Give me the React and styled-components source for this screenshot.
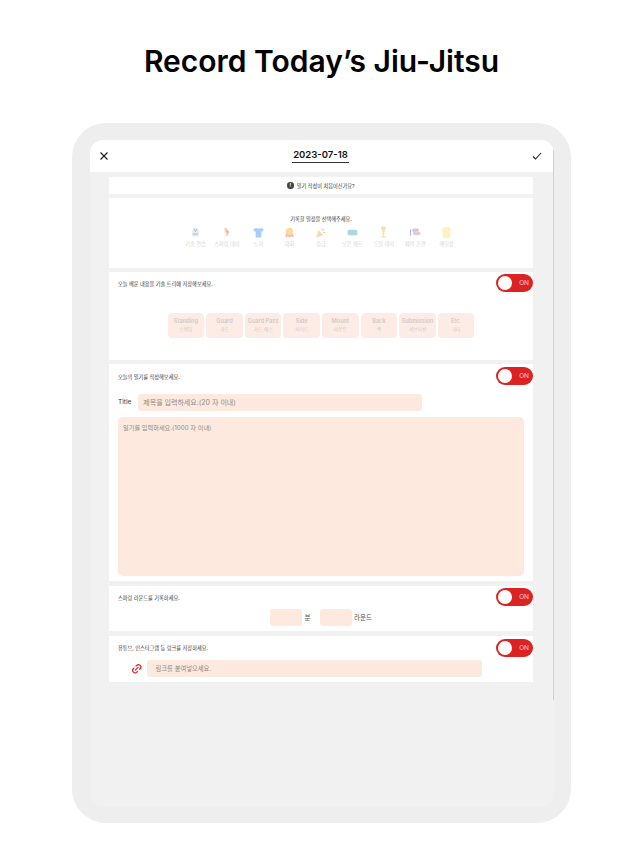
import React from "react";
import styled, { createGlobalStyle } from "styled-components";
import { Link2 } from "lucide-react";

const GlobalStyle = createGlobalStyle`
  html, body {
    margin: 0;
    padding: 0;
    background: #fff;
    font-family: Inter, "Noto Sans CJK KR", sans-serif;
  }
  * {
    box-sizing: border-box;
  }
`;

const Page = styled.div`
  width: 643px;
  height: 858px;
  overflow: hidden;
  background: #fff;
`;

const Headline = styled.h1`
  margin: 0;
  height: 123px;
  padding-top: 42px;
  text-align: center;
  font-size: 30px;
  line-height: 38px;
  font-weight: 600;
  color: #000;
`;

const Frame = styled.div`
  width: 499px;
  height: 700px;
  margin: 0 auto;
  padding: 17px 17px 17px 18px;
  background: #eeeeee;
  border-radius: 34px;
`;

const Screen = styled.div`
  position: relative;
  height: 666px;
  background: #f1f1f1;
  border-radius: 13px;
  overflow: hidden;
`;

const ScrollLine = styled.div`
  position: absolute;
  top: 10px;
  right: 0;
  width: 1px;
  height: 550px;
  background: #f3c3a5;
`;

const TopBar = styled.header`
  height: 32px;
  margin-right: 1px;
  padding: 0 11px 0 9px;
  background: #fff;
  display: flex;
  align-items: center;
  justify-content: space-between;
  color: #222;
`;

const DateLabel = styled.div`
  font-size: 9.5px;
  line-height: 12px;
  font-weight: 600;
  color: #111;
  padding: 0 1px 1px;
  border-bottom: 1.5px solid #333;
`;

const Cards = styled.div`
  display: flex;
  flex-direction: column;
  gap: 4.5px;
  padding: 5px 21px 0 19px;
`;

const Card = styled.section`
  height: ${(p) => p.$height}px;
  padding-left: ${(p) => p.$inset ?? 9}px;
  background: #fff;
`;

const InfoCard = styled.section`
  height: 16.5px;
  background: #fff;
  display: flex;
  align-items: center;
  justify-content: center;
  gap: 3px;
  font-size: 5.2px;
  color: #333;
`;

const InfoDot = styled.span`
  width: 6.5px;
  height: 6.5px;
  border-radius: 50%;
  background: #444;
  color: #fff;
  font-size: 5px;
  font-weight: 700;
  line-height: 6.5px;
  text-align: center;
`;

const CenterTitle = styled.div`
  padding-top: 17px;
  text-align: center;
  font-size: 5.2px;
  line-height: 8px;
  color: #333;
`;

const ScheduleRow = styled.div`
  margin: 3px 0 0;
  display: flex;
  justify-content: center;
`;

const ScheduleItem = styled.div`
  width: 31.4px;
  display: flex;
  flex-direction: column;
  align-items: center;
  gap: 0.5px;
  font-size: 5.2px;
  line-height: 8px;
  color: #d4d4d4;
  white-space: nowrap;

  svg {
    display: block;
    width: 13px;
    height: 13px;
  }
`;

const SectionHead = styled.div`
  height: 18px;
  margin-top: ${(p) => p.$top}px;
  display: flex;
  align-items: center;
  justify-content: space-between;
  font-size: 5.2px;
  color: #333;
`;

const Toggle = styled.div`
  width: 37px;
  height: 18px;
  padding: 2px 4px 2px 2px;
  border-radius: 9px;
  background: #dc2323;
  display: flex;
  align-items: center;
  justify-content: space-between;
  font-size: 6.5px;
  color: #f8c9c9;
`;

const Knob = styled.span`
  width: 14px;
  height: 14px;
  border-radius: 50%;
  background: #fff;
`;

const TreeRow = styled.div`
  margin: 21px 0 0 -9px;
  display: flex;
  justify-content: center;
  gap: 2px;
`;

const TreeButton = styled.div`
  width: 36.6px;
  height: 25.4px;
  border-radius: 4px;
  background: #fdece5;
  display: flex;
  flex-direction: column;
  align-items: center;
  justify-content: center;
  white-space: nowrap;
  color: #cfcac8;
`;

const TreeName = styled.span`
  font-size: 5.6px;
  line-height: 7.5px;
  font-weight: 600;
`;

const TreeSub = styled.span`
  font-size: 4.8px;
  line-height: 7px;
`;

const TitleRow = styled.div`
  margin-top: 8.5px;
  display: flex;
  align-items: center;
  gap: 7px;
  font-size: 6.5px;
  color: #333;
`;

const fieldStyle = `
  border: 0;
  outline: 0;
  display: block;
  background: #fde9dd;
  font-family: Inter, "Noto Sans CJK KR", sans-serif;
  color: #8f8a86;
  &::placeholder {
    color: #8f8a86;
    opacity: 1;
  }
`;

const Field = styled.input`
  ${fieldStyle}
  width: ${(p) => p.$width}px;
  height: 17px;
  padding: 0 ${(p) => p.$pad ?? 5}px;
  border-radius: 3px;
  font-size: ${(p) => p.$size ?? 7}px;
`;

const DiaryArea = styled.textarea`
  ${fieldStyle}
  width: 406px;
  height: 159px;
  margin-top: 6.5px;
  padding: 6px 5px;
  border-radius: 5px;
  font-size: 6.2px;
  resize: none;
`;

const RoundRow = styled.div`
  margin: 2.5px 0 0 -9px;
  display: flex;
  justify-content: center;
  align-items: center;
  font-size: 6.5px;
  color: #555;
`;

const RoundUnit = styled.span`
  margin: 0 ${(p) => p.$after}px 0 2.5px;
`;

const LinkRow = styled.div`
  margin-top: 3.5px;
  padding-left: 12.5px;
  display: flex;
  align-items: center;
  gap: 4.5px;
  color: #dc2323;

  svg {
    width: 11.5px;
    height: 11.5px;
    transform: rotate(-45deg);
  }
`;

const schedules = [
  {
    label: "기술 연습",
    icon: (
      <>
        <path d="M4 13V5.5L6.5 2h3L12 5.5V13z" fill="#e6e9ec" />
        <path d="M6 3l2 4 2-4M4.5 10h7" stroke="#a3abb6" strokeWidth="0.8" fill="none" />
      </>
    ),
  },
  {
    label: "스파링 데이",
    icon: (
      <>
        <path d="M5 2c3 0 6 2 6 6 0 3-2 5-5 5 2-2 2-4 0-6z" fill="#f9d2b8" />
        <path d="M7 5l4 2-2 2z" fill="#f3a878" />
      </>
    ),
  },
  {
    label: "노기",
    icon: <path d="M5 2L1.5 4.2 3 7l1.5-.6V14h7V6.4L13 7l1.5-2.8L11 2C10 3.5 6 3.5 5 2z" fill="#a9cdf4" />,
  },
  {
    label: "대회",
    icon: (
      <>
        <path d="M4 9l-1.5 5 3-1 2.5 1 2.5-1 3 1L12 9z" fill="#f8bdb0" />
        <circle cx="8" cy="6.5" r="4.5" fill="#fbdca0" />
      </>
    ),
  },
  {
    label: "승급",
    icon: (
      <>
        <path d="M2.5 14.5l3-9.5 6 6z" fill="#f8d8b0" />
        <path d="M9 3l1 2M12.5 3.5l-1.5 2.5M14 8l-2.5 0" stroke="#f4b0b0" strokeWidth="1.1" />
      </>
    ),
  },
  {
    label: "오픈 매트",
    icon: <rect x="2" y="4.5" width="12" height="7" rx="2" fill="#afd5e2" />,
  },
  {
    label: "드릴 데이",
    icon: <path d="M4.5 1h7L9 8v5h2.5v1h-7v-1H7V8z" fill="#f6dfb0" />,
  },
  {
    label: "체력 훈련",
    icon: (
      <>
        <rect x="4" y="3" width="8" height="4" rx="1.5" fill="#c6cde0" />
        <rect x="5" y="7" width="9" height="4" rx="1.5" fill="#f6c4ca" />
        <path d="M2 4v8" stroke="#a3aecb" strokeWidth="1.2" />
      </>
    ),
  },
  {
    label: "메모장",
    icon: <rect x="3" y="1" width="10" height="14" rx="3.5" fill="#fcf3c2" />,
  },
];

const techniques = [
  ["Standing", "스탠딩"],
  ["Guard", "가드"],
  ["Guard Pass", "가드 패스"],
  ["Side", "사이드"],
  ["Mount", "마운트"],
  ["Back", "백"],
  ["Submission", "서브미션"],
  ["Etc.", "기타"],
];

const Switch = () => (
  <Toggle>
    <Knob />
    ON
  </Toggle>
);

const App = () => (
  <Page>
    <GlobalStyle />
    <Headline>Record Today’s Jiu-Jitsu</Headline>
    <Frame>
      <Screen>
        <TopBar>
          <svg width="10" height="10" viewBox="0 0 10 10" fill="none" stroke="currentColor" strokeWidth="1.2">
            <path d="M1.5 1.5l7 7M8.5 1.5l-7 7" />
          </svg>
          <DateLabel>2023-07-18</DateLabel>
          <svg width="10" height="10" viewBox="0 0 10 10" fill="none" stroke="currentColor" strokeWidth="1.1">
            <path d="M1 5.5l2.5 2.5L9 2" />
          </svg>
        </TopBar>
        <ScrollLine />
        <Cards>
          <InfoCard>
            <InfoDot>!</InfoDot>
            일기 작성이 처음이신가요?
          </InfoCard>
          <Card $height={69.5} $inset={0}>
            <CenterTitle>기록할 일정을 선택해주세요.</CenterTitle>
            <ScheduleRow>
              {schedules.map((item) => (
                <ScheduleItem key={item.label}>
                  <svg viewBox="0 0 16 16">{item.icon}</svg>
                  {item.label}
                </ScheduleItem>
              ))}
            </ScheduleRow>
          </Card>
          <Card $height={87.5}>
            <SectionHead $top={2}>
              오늘 배운 내용을 기술 트리에 저장해보세요.
              <Switch />
            </SectionHead>
            <TreeRow>
              {techniques.map(([name, sub]) => (
                <TreeButton key={name}>
                  <TreeName>{name}</TreeName>
                  <TreeSub>{sub}</TreeSub>
                </TreeButton>
              ))}
            </TreeRow>
          </Card>
          <Card $height={217}>
            <SectionHead $top={3}>
              오늘의 일기를 작성해보세요.
              <Switch />
            </SectionHead>
            <TitleRow>
              Title
              <Field $width={284} placeholder="제목을 입력하세요.(20 자 이내)" readOnly />
            </TitleRow>
            <DiaryArea placeholder="일기를 입력하세요.(1000 자 이내)" readOnly />
          </Card>
          <Card $height={45.5}>
            <SectionHead $top={2.5}>
              스파링 라운드를 기록하세요.
              <Switch />
            </SectionHead>
            <RoundRow>
              <Field $width={32} readOnly />
              <RoundUnit $after={9}>분</RoundUnit>
              <Field $width={32} readOnly />
              <RoundUnit $after={0}>라운드</RoundUnit>
            </RoundRow>
          </Card>
          <Card $height={46}>
            <SectionHead $top={3}>
              유튜브, 인스타그램 등 링크를 저장하세요.
              <Switch />
            </SectionHead>
            <LinkRow>
              <Link2 strokeWidth={2.5} />
              <Field $width={335} $pad={9} $size={6.3} placeholder="링크를 붙여넣으세요." readOnly />
            </LinkRow>
          </Card>
        </Cards>
      </Screen>
    </Frame>
  </Page>
);

export default App;
